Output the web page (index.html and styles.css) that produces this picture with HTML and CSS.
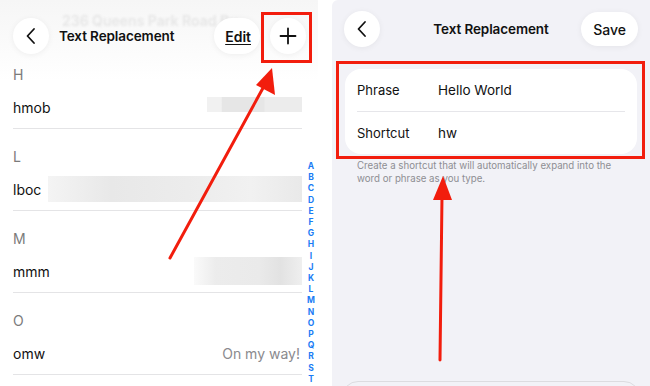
FILE: index.html
```html
<!DOCTYPE html>
<html lang="en">
<head>
    <meta charset="UTF-8">
    <title>Text Replacement</title>
    <link rel="stylesheet" href="styles.css">
</head>
<body>
    <div class="screen list-screen">
        <div class="ghost">236 Queens Park Road Bu</div>
        <div class="nav">
            <div class="round-btn">
                <svg width="12" height="18" viewBox="0 0 12 18"><path d="M9 2 L2.5 9 L9 16" fill="none" stroke="#111" stroke-width="1.8" stroke-linecap="round" stroke-linejoin="round"/></svg>
            </div>
            <div class="nav-title">Text Replacement</div>
            <div class="pill-btn edit">Edit</div>
            <div class="round-btn plus">
                <svg width="18" height="18" viewBox="0 0 18 18"><path d="M9 1.5 V16.5 M1.5 9 H16.5" stroke="#111" stroke-width="1.8" stroke-linecap="round"/></svg>
            </div>
        </div>

        <div class="list">
            <div class="section-head">H</div>
            <div class="row">
                <span class="shortcut">hmob</span>
                <span class="blur short" style="width: 95px"></span>
            </div>
            <div class="section-head">L</div>
            <div class="row">
                <span class="shortcut">lboc</span>
                <span class="blur" style="width: 254px"></span>
            </div>
            <div class="section-head">M</div>
            <div class="row">
                <span class="shortcut">mmm</span>
                <span class="blur tall" style="width: 108px"></span>
            </div>
            <div class="section-head">O</div>
            <div class="row">
                <span class="shortcut">omw</span>
                <span class="phrase">On my way!</span>
            </div>
        </div>

        <div class="index">
            <span>A</span><span>B</span><span>C</span><span>D</span><span>E</span>
            <span>F</span><span>G</span><span>H</span><span>I</span><span>J</span>
            <span>K</span><span>L</span><span>M</span><span>N</span><span>O</span>
            <span>P</span><span>Q</span><span>R</span><span>S</span><span>T</span>
        </div>

        <div class="highlight plus-box"></div>
        <svg class="arrow" width="318" height="386" viewBox="0 0 318 386">
            <line x1="170" y1="258" x2="263" y2="88" stroke="#f21d0d" stroke-width="3" stroke-linecap="round"/>
            <polygon points="272,68 275,95 256,85" fill="#f21d0d"/>
        </svg>
    </div>

    <div class="divider"></div>

    <div class="screen edit-screen">
        <div class="nav bar">
            <div class="round-btn">
                <svg width="12" height="18" viewBox="0 0 12 18"><path d="M9 2 L2.5 9 L9 16" fill="none" stroke="#111" stroke-width="1.8" stroke-linecap="round" stroke-linejoin="round"/></svg>
            </div>
            <div class="nav-title center">Text Replacement</div>
            <div class="pill-btn save">Save</div>
        </div>

        <div class="card">
            <div class="field">
                <span class="label">Phrase</span>
                <span class="value">Hello World</span>
            </div>
            <div class="field">
                <span class="label">Shortcut</span>
                <span class="value">hw</span>
            </div>
        </div>
        <p class="footnote">Create a shortcut that will automatically expand into the word or phrase as you type.</p>

        <div class="bottom-card"></div>

        <div class="highlight card-box"></div>
        <svg class="arrow" width="318" height="386" viewBox="0 0 318 386">
            <line x1="108" y1="360" x2="110" y2="196" stroke="#f21d0d" stroke-width="3" stroke-linecap="round"/>
            <polygon points="111,176 120,200 101,200" fill="#f21d0d"/>
        </svg>
    </div>
</body>
</html>
```

FILE: styles.css
```css
body {
    margin: 0;
    width: 650px;
    height: 386px;
    overflow: hidden;
    display: flex;
    background-color: #fff;
    font-family: Inter, "Noto Sans", sans-serif;
    color: #111;
}
.screen {
    position: relative;
    width: 318px;
    height: 386px;
    overflow: hidden;
    flex-shrink: 0;
}
.divider {
    width: 14px;
    flex-shrink: 0;
}
.list-screen {
    background: linear-gradient(#f6f6f6, #fdfdfd 64px, #fff 80px);
}
.edit-screen {
    background-color: #f2f2f7;
    border-top-left-radius: 6px;
}

/* nav bars */
.nav {
    position: relative;
    display: flex;
    align-items: center;
    height: 36px;
    padding: 18px 12px 0 13px;
}
.nav.bar {
    display: grid;
    grid-template-columns: 1fr auto 1fr;
    padding: 11px 12px 0 12px;
}
.ghost {
    position: absolute;
    top: 12px;
    left: 62px;
    font-size: 14px;
    font-weight: 600;
    color: #e6e6e6;
    filter: blur(1.2px);
    white-space: nowrap;
}
.round-btn {
    position: relative;
    width: 36px;
    height: 36px;
    border-radius: 50%;
    background-color: #fff;
    box-shadow: 0 1px 6px rgba(0, 0, 0, 0.06);
    display: flex;
    align-items: center;
    justify-content: center;
    flex-shrink: 0;
}
.nav-title {
    position: relative;
    flex: 1;
    margin-left: 10px;
    font-size: 13.5px;
    font-weight: 600;
    letter-spacing: -0.1px;
}
.nav-title.center {
    margin-left: 0;
    text-align: center;
}
.pill-btn {
    position: relative;
    height: 36px;
    padding: 0 10px;
    border-radius: 18px;
    background-color: #fff;
    box-shadow: 0 1px 6px rgba(0, 0, 0, 0.06);
    display: flex;
    align-items: center;
    font-size: 14px;
    font-weight: 600;
}
.edit {
    margin-right: 10px;
    padding: 0 9px 0 11px;
    text-decoration: underline;
    text-underline-offset: 2px;
}
.save {
    justify-self: end;
    height: 34px;
    padding: 0 12px;
    font-weight: 500;
}

/* list */
.list {
    padding: 10px 16px 0 13px;
}
.section-head {
    height: 22px;
    line-height: 22px;
    font-size: 14px;
    color: #7b7b7b;
}
.row {
    display: flex;
    align-items: center;
    justify-content: space-between;
    height: 42px;
    border-bottom: 1px solid #e4e4e6;
    margin-bottom: 17px;
    font-size: 14px;
}
.row .shortcut {
    color: #111;
}
.blur {
    height: 26px;
    background: linear-gradient(90deg, #f4f4f4, #e8e8e8 25%, #ececec 55%, #f1f1f1 80%, #e9e9e9);
}
.blur.short {
    height: 15px;
    margin-top: -6px;
    background: linear-gradient(90deg, #f1f1f1, #f1f1f1 15%, #e6e6e6 16%, #e6e6e6 60%, #ececec 61%);
}
.blur.tall {
    height: 28px;
    background: linear-gradient(90deg, #fafafa, #ececec 20%, #eaeaea 60%, #e2e2e2 80%, #efefef);
}
.phrase {
    color: #8a8a8e;
    font-size: 14px;
    padding-right: 2px;
}
.index {
    position: absolute;
    top: 161px;
    right: 1px;
    width: 12px;
    display: flex;
    flex-direction: column;
    align-items: center;
    font-size: 8.5px;
    font-weight: 700;
    line-height: 11.2px;
    color: #1a7cf5;
}

/* edit card */
.card {
    margin: 22px 13px 0 13px;
    background-color: #fff;
    border-radius: 16px;
    padding: 0 12px;
}
.field {
    display: flex;
    align-items: center;
    height: 42px;
    font-size: 13px;
}
.field + .field {
    border-top: 1px solid #e6e6ea;
}
.label {
    width: 81px;
    color: #111;
}
.value {
    font-size: 13.5px;
}
.footnote {
    margin: 5px 20px 0 25px;
    font-size: 9.7px;
    line-height: 13px;
    color: #8e8e93;
}
.bottom-card {
    position: absolute;
    left: 10px;
    right: 10px;
    top: 381px;
    height: 30px;
    background-color: #f2f2f7;
    border: 1px solid #dcdce0;
    border-radius: 16px;
}

/* annotations */
.highlight {
    position: absolute;
    border: 3px solid #f21d0d;
}
.plus-box {
    left: 261px;
    top: 12px;
    width: 45px;
    height: 45px;
}
.card-box {
    left: 4px;
    top: 61px;
    width: 303px;
    height: 92px;
}
.arrow {
    position: absolute;
    left: 0;
    top: 0;
}
```
